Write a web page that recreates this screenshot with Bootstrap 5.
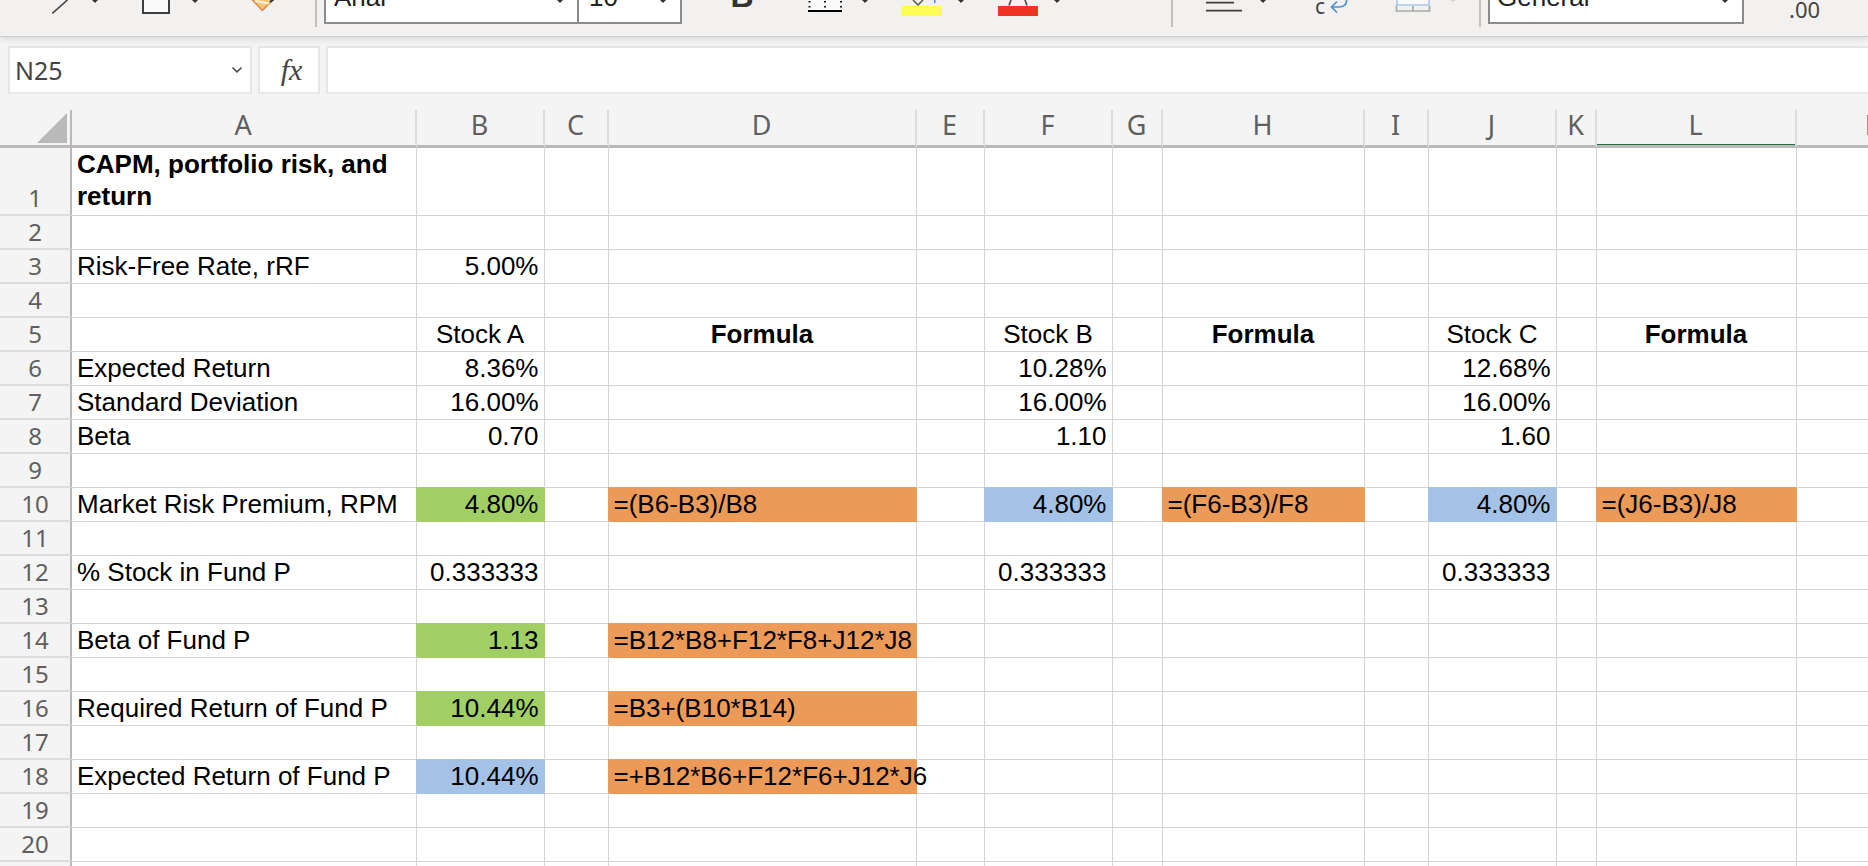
<!DOCTYPE html>
<html lang="en">
<head>
  <meta charset="UTF-8">
  <title>CAPM, portfolio risk, and return</title>
  <meta name="viewport" content="width=device-width, initial-scale=1">
  <link href="https://cdn.jsdelivr.net/npm/bootstrap@5.3.0/dist/css/bootstrap.min.css" rel="stylesheet">
  <script src="https://cdn.jsdelivr.net/npm/bootstrap@5.3.0/dist/js/bootstrap.bundle.min.js"></script>
  <style>
    html, body { height: 866px; overflow: hidden; background: #fff; }
    .ribbon { height: 37px; background: #f2f1ef; border-bottom: 1.5px solid #cfcdc9; box-shadow: 0 3px 6px rgba(0,0,0,.09); position: relative; z-index: 2; overflow: hidden; }
    .ribbon svg { display: block; flex: none; }
    .rb-sep { width: 2px; height: 27px; background: #c2c1bf; flex: none; }
    .rb-combo { height: 24px; background: #fff; border: 2px solid #8c8c8c; border-top: 0; overflow: hidden; flex: none; font: 26px/26px "Liberation Sans", sans-serif; color: #222; padding-bottom: 12px; }
    .rb-caret { width: 0; height: 0; border: 3px solid transparent; border-top-color: #333; border-bottom: 0; align-self: flex-start; flex: none; }
    .rb-font { width: 358px; margin-left: 7px; }
    .rb-font-name { width: 255px; padding-left: 8px; padding-right: 14px; border-right: 2px solid #8c8c8c; }
    .rb-font-size { padding-left: 10px; padding-right: 14px; flex: 1; }
    .rb-general { width: 256px; margin-left: 7px; padding-left: 7px; padding-right: 14px; }
    .rb-decimals { margin-left: 45px; font: 22px/22px "Noto Sans", sans-serif; color: #444; margin-top: -2px; flex: none; }
    .ml-a { margin-left: 40px; } .ml-b { margin-left: 5px; } .ml-c { margin-left: 38px; } .ml-d { margin-left: 91px; } .ml-e { margin-left: 17px; } .ml-f { margin-left: 9px; }

    .fbar { height: 73px; background: #f4f4f4; padding: 9px 0 16px 8px; gap: 6px; }
    .fbox { height: 48px; background: #fff; border: 2px solid #e6e6e6; flex: none; }
    .fbox-name { width: 244px; padding: 0 7px 0 5px; font: 25px "Noto Sans", sans-serif; color: #444; }
    .fbox-fx { width: 62px; font: italic 30px "Liberation Serif", serif; color: #444; padding-left: 5px; }
    .fbox-input { flex: 1 0 auto; margin-right: -4px; }

    .sheet-wrap { width: 1868px; overflow: hidden; }
    .sheet { table-layout: fixed; width: 1959.5px; border-collapse: separate; border-spacing: 0; font: 26px/32px "Liberation Sans", sans-serif; color: #000; }
    .c-rh { width: 72px; } .c-a { width: 344.5px; } .c-b { width: 128px; } .c-c { width: 64px; } .c-d { width: 308px; }
    .c-e { width: 68px; } .c-f { width: 128px; } .c-g { width: 50px; } .c-h { width: 202px; } .c-i { width: 64px; }
    .c-j { width: 128px; } .c-k { width: 40px; } .c-l { width: 200px; } .c-m { width: 163px; }
    .sheet th { height: 38px; padding: 0 0 6px; background: #f4f4f4; border-right: 2px solid #dcdcdc; border-bottom: 3px solid #b9b9b9; font: 400 27px/29px "Noto Sans", sans-serif; color: #5f5f5f; text-align: center; position: relative; white-space: nowrap; }
    .sheet th.corner { border-right: 2px solid #b9b9b9; }
    .sheet th.active-col { box-shadow: inset 0 -1px 0 #2c6e3f; }
    .corner-mark { position: absolute; left: 37px; top: 3px; width: 30px; height: 30px; background: #b9b9b9; clip-path: polygon(100% 0, 100% 100%, 0 100%); }
    .sheet tbody th { height: 34px; padding: 0; font-size: 24px; line-height: 32px; vertical-align: bottom; border-right: 2px solid #b9b9b9; border-bottom: 2px solid #dcdcdc; }
    .sheet tbody tr.tall th { height: 68px; }
    .sheet td { height: 34px; padding: 0 5px 1px 5px; border-right: 1px solid #d4d4d4; border-bottom: 1.5px solid #d4d4d4; white-space: nowrap; vertical-align: bottom; overflow: visible; }
    .sheet td.wrap-cell { white-space: normal; padding-bottom: 3px; }
    .fill-green { background: #a2cf63; border-color: #a2cf63 !important; box-shadow: -1px -1px 0 #a2cf63; }
    .fill-blue { background: #a3c2e6; border-color: #a3c2e6 !important; box-shadow: -1px -1px 0 #a3c2e6; }
    .fill-orange { background: #ec9a57; border-color: #ec9a57 !important; box-shadow: -1px -1px 0 #ec9a57; }
  </style>
</head>
<body>
  <div class="ribbon d-flex align-items-start">
    <svg class="ml-a" width="270" height="36" viewBox="40 0 270 36">
      <path d="M52.3 13.3 67.5 0" stroke="#444" stroke-width="1.6" fill="none"/>
      <path d="M92 0h6l-3 3z" fill="#333"/>
      <rect x="143" y="-4" width="26" height="17" fill="#fafafa" stroke="#3d3d3d" stroke-width="2"/>
      <path d="M192 0h6l-3 3z" fill="#333"/>
      <path d="M251.5 -1 262.3 10.5 274 -1z" fill="#f6c678" stroke="#e08a3c" stroke-width="1.5"/>
      <path d="M255 1 269 3.5" stroke="#fbeedb" stroke-width="2"/>
      <path d="M270 2 274 -1" stroke="#333" stroke-width="2"/>
    </svg>
    <div class="rb-sep ml-b"></div>
    <div class="d-flex rb-font">
      <div class="rb-combo rb-font-name d-flex align-items-end justify-content-between"><span>Arial</span><i class="rb-caret"></i></div>
      <div class="rb-combo rb-font-size d-flex align-items-end justify-content-between border-start-0"><span>10</span><i class="rb-caret"></i></div>
    </div>
    <svg class="ml-c" width="360" height="36" viewBox="720 0 360 36">
      <text x="730.500" y="7" font-family="Liberation Sans" font-weight="700" font-size="32" fill="#333">B</text>
      <rect x="809" y="-2" width="32" height="12" fill="#fafafa"/>
      <path d="M809.5 1v1.500M809.5 6v1.500M825 1v1.500M825 6v1.500M841 1v1.500M841 6v1.500" stroke="#111" stroke-width="2" fill="none"/>
      <path d="M808 11h34" stroke="#000" stroke-width="2"/>
      <path d="M862 0h6l-3 3z" fill="#333"/>
      <path d="M913 0 918 5 923 0" stroke="#555" stroke-width="1.500" fill="none"/>
      <path d="M934.700 0v3" stroke="#3f86d8" stroke-width="1.500"/>
      <rect x="902" y="6" width="40" height="10" fill="#fdfd55"/>
      <path d="M958 0h6l-3 3z" fill="#333"/>
      <path d="M1009 5.500 1011 0M1027 5.500 1025 0" stroke="#555" stroke-width="1.800"/>
      <rect x="998" y="6" width="40" height="10" fill="#ee3524"/>
      <path d="M1054 0h6l-3 3z" fill="#333"/>
    </svg>
    <div class="rb-sep ml-d"></div>
    <svg class="ml-e" width="280" height="36" viewBox="1190 0 280 36">
      <path d="M1206 2.700h28M1206 10.700h36" stroke="#3d3d3d" stroke-width="1.800"/>
      <path d="M1260 0h6l-3 3z" fill="#333"/>
      <text x="1315" y="13.500" font-family="Noto Sans" font-size="21" fill="#444">c</text>
      <path d="M1346.500 0C1347 5 1343 7 1339 7H1331.500M1337 1.500 1331.500 7 1337 12.500" stroke="#4a90d9" stroke-width="1.700" fill="none"/>
      <rect x="1398" y="-2" width="30" height="7" fill="#fafafa"/>
      <path d="M1397 -2V5M1429 -2V5M1396.500 5h33" stroke="#a8c8e8" stroke-width="1.500" fill="none"/>
      <path d="M1396.500 5.500V11H1429.500V5.500M1413 6V11" stroke="#aaa" stroke-width="1.700" fill="none"/>
      <path d="M1450 0h6l-3 2z" fill="#d4d4d4"/>
    </svg>
    <div class="rb-sep ml-f"></div>
    <div class="rb-combo rb-general d-flex align-items-end justify-content-between"><span>General</span><i class="rb-caret"></i></div>
    <div class="rb-decimals">.00</div>
  </div>

  <div class="fbar d-flex">
    <div class="fbox fbox-name d-flex align-items-center justify-content-between">
      <span>N25</span>
      <svg width="12" height="8" viewBox="0 0 12 8"><path d="M1.500 1.500 6 6l4.500-4.500" stroke="#444" stroke-width="1.500" fill="none"/></svg>
    </div>
    <div class="fbox fbox-fx d-flex align-items-center justify-content-center">fx</div>
    <div class="fbox fbox-input"></div>
  </div>

  <div class="sheet-wrap">
  <table class="sheet">
    <colgroup>
      <col class="c-rh"><col class="c-a"><col class="c-b"><col class="c-c"><col class="c-d"><col class="c-e"><col class="c-f"><col class="c-g"><col class="c-h"><col class="c-i"><col class="c-j"><col class="c-k"><col class="c-l"><col class="c-m">
    </colgroup>
    <thead>
      <tr><th class="corner"><span class="corner-mark"></span></th><th>A</th><th>B</th><th>C</th><th>D</th><th>E</th><th>F</th><th>G</th><th>H</th><th>I</th><th>J</th><th>K</th><th class="active-col">L</th><th>M</th></tr>
    </thead>
    <tbody>
      <tr class="tall"><th>1</th><td class="fw-bold wrap-cell">CAPM, portfolio risk, and return</td><td></td><td></td><td></td><td></td><td></td><td></td><td></td><td></td><td></td><td></td><td></td><td></td></tr>
      <tr><th>2</th><td></td><td></td><td></td><td></td><td></td><td></td><td></td><td></td><td></td><td></td><td></td><td></td><td></td></tr>
      <tr><th>3</th><td>Risk-Free Rate, rRF</td><td class="text-end">5.00%</td><td></td><td></td><td></td><td></td><td></td><td></td><td></td><td></td><td></td><td></td><td></td></tr>
      <tr><th>4</th><td></td><td></td><td></td><td></td><td></td><td></td><td></td><td></td><td></td><td></td><td></td><td></td><td></td></tr>
      <tr><th>5</th><td></td><td class="text-center">Stock A</td><td></td><td class="text-center fw-bold">Formula</td><td></td><td class="text-center">Stock B</td><td></td><td class="text-center fw-bold">Formula</td><td></td><td class="text-center">Stock C</td><td></td><td class="text-center fw-bold">Formula</td><td></td></tr>
      <tr><th>6</th><td>Expected Return</td><td class="text-end">8.36%</td><td></td><td></td><td></td><td class="text-end">10.28%</td><td></td><td></td><td></td><td class="text-end">12.68%</td><td></td><td></td><td></td></tr>
      <tr><th>7</th><td>Standard Deviation</td><td class="text-end">16.00%</td><td></td><td></td><td></td><td class="text-end">16.00%</td><td></td><td></td><td></td><td class="text-end">16.00%</td><td></td><td></td><td></td></tr>
      <tr><th>8</th><td>Beta</td><td class="text-end">0.70</td><td></td><td></td><td></td><td class="text-end">1.10</td><td></td><td></td><td></td><td class="text-end">1.60</td><td></td><td></td><td></td></tr>
      <tr><th>9</th><td></td><td></td><td></td><td></td><td></td><td></td><td></td><td></td><td></td><td></td><td></td><td></td><td></td></tr>
      <tr><th>10</th><td>Market Risk Premium, RPM</td><td class="text-end fill-green">4.80%</td><td></td><td class="fill-orange">=(B6-B3)/B8</td><td></td><td class="text-end fill-blue">4.80%</td><td></td><td class="fill-orange">=(F6-B3)/F8</td><td></td><td class="text-end fill-blue">4.80%</td><td></td><td class="fill-orange">=(J6-B3)/J8</td><td></td></tr>
      <tr><th>11</th><td></td><td></td><td></td><td></td><td></td><td></td><td></td><td></td><td></td><td></td><td></td><td></td><td></td></tr>
      <tr><th>12</th><td>% Stock in Fund P</td><td class="text-end">0.333333</td><td></td><td></td><td></td><td class="text-end">0.333333</td><td></td><td></td><td></td><td class="text-end">0.333333</td><td></td><td></td><td></td></tr>
      <tr><th>13</th><td></td><td></td><td></td><td></td><td></td><td></td><td></td><td></td><td></td><td></td><td></td><td></td><td></td></tr>
      <tr><th>14</th><td>Beta of Fund P</td><td class="text-end fill-green">1.13</td><td></td><td class="fill-orange">=B12*B8+F12*F8+J12*J8</td><td></td><td></td><td></td><td></td><td></td><td></td><td></td><td></td><td></td></tr>
      <tr><th>15</th><td></td><td></td><td></td><td></td><td></td><td></td><td></td><td></td><td></td><td></td><td></td><td></td><td></td></tr>
      <tr><th>16</th><td>Required Return of Fund P</td><td class="text-end fill-green">10.44%</td><td></td><td class="fill-orange">=B3+(B10*B14)</td><td></td><td></td><td></td><td></td><td></td><td></td><td></td><td></td><td></td></tr>
      <tr><th>17</th><td></td><td></td><td></td><td></td><td></td><td></td><td></td><td></td><td></td><td></td><td></td><td></td><td></td></tr>
      <tr><th>18</th><td>Expected Return of Fund P</td><td class="text-end fill-blue">10.44%</td><td></td><td class="fill-orange">=+B12*B6+F12*F6+J12*J6</td><td></td><td></td><td></td><td></td><td></td><td></td><td></td><td></td><td></td></tr>
      <tr><th>19</th><td></td><td></td><td></td><td></td><td></td><td></td><td></td><td></td><td></td><td></td><td></td><td></td><td></td></tr>
      <tr><th>20</th><td></td><td></td><td></td><td></td><td></td><td></td><td></td><td></td><td></td><td></td><td></td><td></td><td></td></tr>
      <tr><th></th><td></td><td></td><td></td><td></td><td></td><td></td><td></td><td></td><td></td><td></td><td></td><td></td><td></td></tr>
    </tbody>
  </table>
  </div>
</body>
</html>
